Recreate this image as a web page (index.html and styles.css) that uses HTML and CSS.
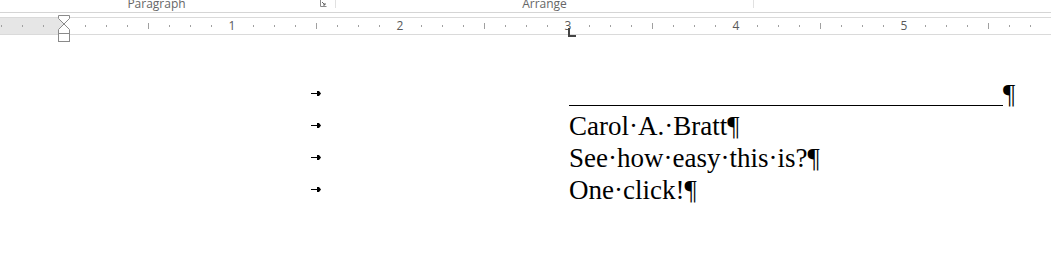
FILE: index.html
```html
<!DOCTYPE html>
<html lang="en">
<head>
    <meta charset="UTF-8">
    <title>Document - Word</title>
    <link rel="stylesheet" href="styles.css">
</head>
<body>
    <div class="ribbon">
        <div class="group group-paragraph">
            <span class="group-label">Paragraph</span>
            <svg class="launcher" width="7" height="7" viewBox="0 0 7 7">
                <path d="M0.5 0 V6.5 H6.5" fill="none" stroke="#8a8a8a"/>
                <path d="M2 2 L5 5 M5 3 V5 H3" fill="none" stroke="#666"/>
            </svg>
        </div>
        <div class="group group-arrange">
            <span class="group-label">Arrange</span>
        </div>
        <div class="group group-rest"></div>
    </div>

    <svg class="ruler" width="1051" height="30" viewBox="0 0 1051 30">
        <rect x="0" y="4" width="64" height="17" fill="#e6e6e6"/>
        <line x1="0" y1="4.5" x2="1051" y2="4.5" stroke="#dadada"/>
        <line x1="0" y1="21.5" x2="1051" y2="21.5" stroke="#dadada"/>
        <g id="ticks" fill="#a0a0a0"></g>
        <g class="ruler-num" fill="#595959">
            <text x="232" y="17" text-anchor="middle">1</text>
            <text x="400" y="17" text-anchor="middle">2</text>
            <text x="568" y="17" text-anchor="middle">3</text>
            <text x="736" y="17" text-anchor="middle">4</text>
            <text x="904" y="17" text-anchor="middle">5</text>
        </g>
        <path d="M58.5 2.5 H69.5 V5.5 L64 11 L58.5 5.5 Z" fill="#fff" stroke="#8a8a8a"/>
        <path d="M64 11 L69.5 16.5 V20.5 H58.5 V16.5 Z" fill="#fff" stroke="#8a8a8a"/>
        <rect x="58.5" y="20.5" width="11" height="8" fill="#fff" stroke="#8a8a8a"/>
        <path d="M569 15 V23 H576" fill="none" stroke="#444" stroke-width="2"/>
    </svg>

    <div class="page">
        <p class="line">
            <span class="tab"><svg class="tab-mark" width="11" height="5" viewBox="0 0 11 5"><path d="M0 2.5 H7" stroke="#000"/><path d="M6 0 H8 L10 2.5 L8 5 H6 Z" fill="#000"/></svg></span><span class="rule"></span>¶
        </p>
        <p class="line">
            <span class="tab"><svg class="tab-mark" width="11" height="5" viewBox="0 0 11 5"><path d="M0 2.5 H7" stroke="#000"/><path d="M6 0 H8 L10 2.5 L8 5 H6 Z" fill="#000"/></svg></span>Carol·A.·Bratt¶
        </p>
        <p class="line">
            <span class="tab"><svg class="tab-mark" width="11" height="5" viewBox="0 0 11 5"><path d="M0 2.5 H7" stroke="#000"/><path d="M6 0 H8 L10 2.5 L8 5 H6 Z" fill="#000"/></svg></span>See·how·easy·this·is?¶
        </p>
        <p class="line">
            <span class="tab"><svg class="tab-mark" width="11" height="5" viewBox="0 0 11 5"><path d="M0 2.5 H7" stroke="#000"/><path d="M6 0 H8 L10 2.5 L8 5 H6 Z" fill="#000"/></svg></span>One·click!¶
        </p>
    </div>

    <script>
        // ruler ticks every 1/8 inch (21px), zero at the left margin (64px)
        var ticks = document.getElementById("ticks");
        var out = "";
        for (var k = -3; k <= 47; k++) {
            var x = 64 + k * 21;
            if (k % 8 === 0) continue;
            if (Math.abs(k % 8) === 4) {
                out += '<rect x="' + x + '" y="10" width="1" height="6"/>';
            } else {
                out += '<rect x="' + x + '" y="12" width="1" height="2"/>';
            }
        }
        ticks.innerHTML = out;
    </script>
</body>
</html>
```

FILE: styles.css
```css
body {
    margin: 0;
    background-color: #fff;
    overflow: hidden;
}
.ribbon {
    display: flex;
    height: 12px;
    border-bottom: 1px solid #d5d5d5;
    overflow: hidden;
    background-color: #fff;
}
.group {
    position: relative;
    display: flex;
    justify-content: center;
    border-right: 1px solid #e1e1e1;
    height: 8px;
}
.group-paragraph {
    width: 313px;
    padding-right: 22px;
}
.group-arrange {
    width: 417px;
}
.group-rest {
    flex: 1;
    border-right: none;
}
.group-label {
    font-family: "Open Sans", "Noto Sans", sans-serif;
    font-size: 12px;
    line-height: 12px;
    color: #666;
    margin-top: -2px;
    height: 14px;
}
.launcher {
    position: absolute;
    right: 8px;
    top: 0;
}
.ruler {
    display: block;
}
.ruler-num {
    font-family: "Open Sans", "Noto Sans", sans-serif;
    font-size: 12px;
}
.page {
    padding-top: 35px;
}
.line {
    margin: 0;
    height: 32px;
    font-family: "Liberation Serif", "Times New Roman", serif;
    font-size: 27px;
    line-height: 32px;
    color: #000;
    white-space: nowrap;
}
.tab {
    display: inline-block;
    width: 258px;
    padding-left: 311px;
}
.tab-mark {
    vertical-align: 7px;
}
.rule {
    display: inline-block;
    width: 434px;
    height: 1px;
    background-color: #000;
    vertical-align: -3px;
}
```
